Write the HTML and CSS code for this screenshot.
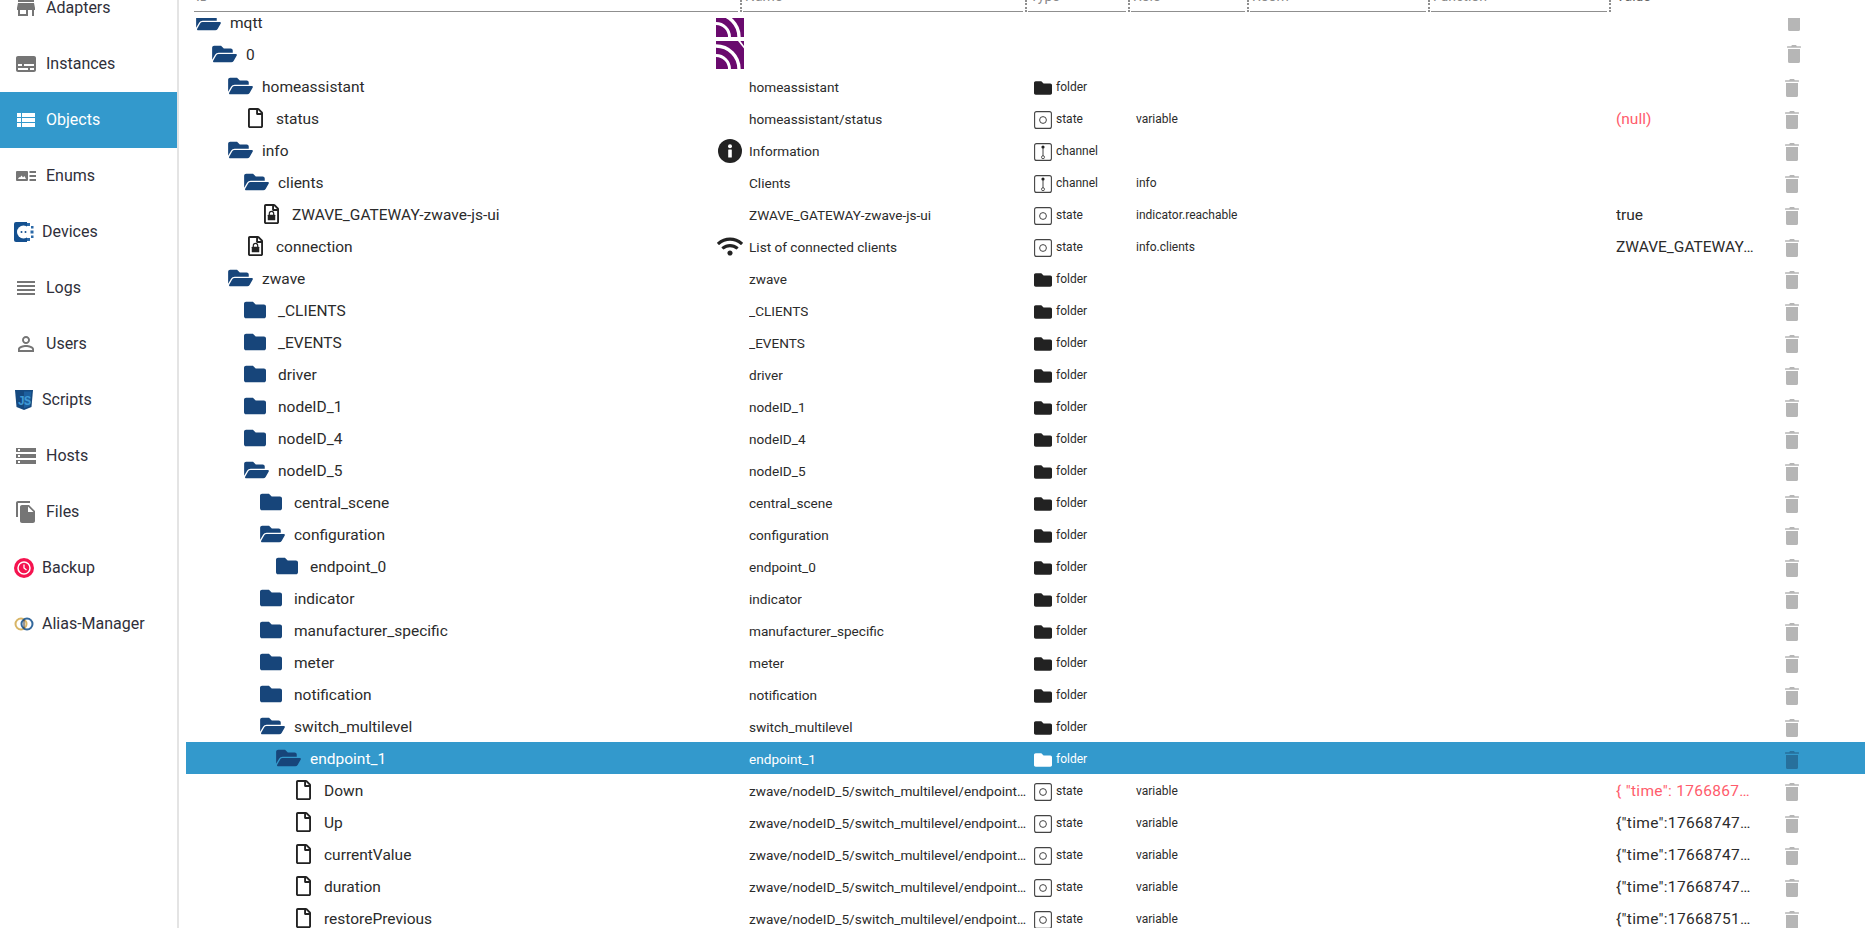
FILE: index.html
```html
<!DOCTYPE html>
<html lang="en">
<head>
  <meta charset="UTF-8" />
  <title>Objects</title>
  <link rel="stylesheet" href="styles.css">
</head>
<body>
  <svg class="sprite" aria-hidden="true">
    <symbol id="open" viewBox="0 0 576 512"><path d="M572.694 292.093L500.27 416.248A63.997 63.997 0 0 1 444.989 448H45.025c-18.523 0-30.064-20.093-20.731-36.093l72.424-124.155A64 64 0 0 1 152 256h399.964c18.523 0 30.064 20.093 20.73 36.093zM152 224h328v-48c0-26.51-21.49-48-48-48H272l-64-64H48C21.49 64 0 85.49 0 112v278.046l69.077-118.418C86.214 242.25 117.989 224 152 224z"/></symbol>
    <symbol id="closed" viewBox="0 0 512 512"><path d="M464 128H272l-64-64H48C21.49 64 0 85.49 0 112v288c0 26.51 21.49 48 48 48h416c26.51 0 48-21.49 48-48V176c0-26.51-21.49-48-48-48z"/></symbol>
    <symbol id="file" viewBox="0 0 384 512"><path d="M369.9 97.9L286 14C277 5 264.8-.1 252.1-.1H48C21.5 0 0 21.5 0 48v416c0 26.5 21.5 48 48 48h288c26.5 0 48-21.5 48-48V131.9c0-12.7-5.1-25-14.1-34zM332.1 128H256V51.9l76.1 76.1zM48 464V48h160v104c0 13.3 10.7 24 24 24h104v288H48z"/></symbol>
    <symbol id="lock" viewBox="0 0 384 512"><path d="M369.9 97.9L286 14C277 5 264.8-.1 252.1-.1H48C21.5 0 0 21.5 0 48v416c0 26.5 21.5 48 48 48h288c26.5 0 48-21.5 48-48V131.9c0-12.7-5.1-25-14.1-34zM332.1 128H256V51.9l76.1 76.1zM48 464V48h160v104c0 13.3 10.7 24 24 24h104v288H48z"/><rect x="96" y="272" width="192" height="144" rx="14"/><path d="M136 280v-36a56 56 0 0 1 112 0v36" fill="none" stroke="currentColor" stroke-width="30"/></symbol>
    <symbol id="state" viewBox="0 0 18 18"><rect x=".6" y=".6" width="16.8" height="16.8" rx="2" fill="none" stroke="currentColor" stroke-width="1.1"/><circle cx="9" cy="9" r="3.4" fill="none" stroke="currentColor" stroke-width="1"/></symbol>
    <symbol id="channel" viewBox="0 0 18 18"><rect x=".6" y=".6" width="16.8" height="16.8" rx="2" fill="none" stroke="currentColor" stroke-width="1.1"/><path d="M9 4v10" stroke="currentColor" stroke-width="1"/><circle cx="9" cy="4" r="1.6"/><circle cx="9" cy="14.2" r="1.5" fill="#fff" stroke="currentColor" stroke-width=".9"/></symbol>
    <symbol id="trash" viewBox="0 0 448 512" preserveAspectRatio="none"><path d="M432 32H312l-9.4-18.7A24 24 0 0 0 281.1 0H166.8a23.72 23.72 0 0 0-21.4 13.3L136 32H16A16 16 0 0 0 0 48v16a16 16 0 0 0 16 16h416a16 16 0 0 0 16-16V48a16 16 0 0 0-16-16zM32 467a48 48 0 0 0 47.9 45h288.2a48 48 0 0 0 47.9-45V112H32z"/></symbol>
    <symbol id="mqtt" viewBox="0 0 28 28"><rect width="28" height="28" fill="#6a0a6e"/><g fill="none" stroke="#fff"><circle cx="0" cy="28" r="13.5" stroke-width="3"/><circle cx="0" cy="28" r="23" stroke-width="3.4"/></g><path d="M22 0h2.4L28 5v2.6z" fill="#fff"/></symbol>
    <symbol id="info" viewBox="0 0 24 24"><circle cx="12" cy="12" r="12"/><rect x="10.2" y="10.4" width="3.6" height="8" rx=".5" fill="#fff"/><circle cx="12" cy="7.2" r="2" fill="#fff"/></symbol>
    <symbol id="wifi" viewBox="0 0 640 512"><path d="M634.91 154.88C457.74-8.99 182.19-8.93 5.09 154.88c-6.66 6.16-6.79 16.59-.35 22.98l34.24 33.97c6.14 6.1 16.02 6.23 22.4.38 145.92-133.68 371.3-133.71 517.25 0 6.38 5.85 16.26 5.71 22.4-.38l34.24-33.97c6.43-6.39 6.3-16.82-.36-22.98zM320 352c-35.35 0-64 28.65-64 64s28.65 64 64 64 64-28.65 64-64-28.65-64-64-64zm202.67-83.59c-115.26-101.93-290.21-101.82-405.34 0-6.9 6.1-7.12 16.69-.57 23.15l34.44 33.99c6 5.92 15.66 6.32 22.05.8 83.95-72.57 209.74-72.41 293.49 0 6.39 5.52 16.05 5.13 22.05-.8l34.44-33.99c6.56-6.46 6.33-17.05-.56-23.15z"/></symbol>
  </svg>

  <aside class="sidebar">
    <nav class="menu">
      <a class="menu-item"><svg class="mi" viewBox="0 0 24 24"><path d="M20 4H4v2h16V4zm1 10v-2l-1-5H4l-1 5v2h1v6h10v-6h4v6h2v-6h1zm-9 4H6v-4h6v4z"/></svg>Adapters</a>
      <a class="menu-item"><svg class="mi" viewBox="0 0 24 24"><path d="M20 4H4c-1.1 0-2 .9-2 2v12c0 1.1.9 2 2 2h16c1.1 0 2-.9 2-2V6c0-1.1-.9-2-2-2zM4 12h4v2H4v-2zm10 6H4v-2h10v2zm6 0h-4v-2h4v2zm0-4H10v-2h10v2z"/></svg>Instances</a>
      <a class="menu-item active"><svg class="mi" viewBox="0 0 24 24"><path d="M3 14h4v-4H3v4zm0 5h4v-4H3v4zM3 9h4V5H3v4zm5 5h13v-4H8v4zm0 5h13v-4H8v4zM8 5v4h13V5H8z"/></svg>Objects</a>
      <a class="menu-item"><svg class="mi" viewBox="0 0 24 24"><path fill-rule="evenodd" d="M3 7h10a1 1 0 0 1 1 1v8a1 1 0 0 1-1 1H3a1 1 0 0 1-1-1V8a1 1 0 0 1 1-1zm1 8h8l-1.6-3-1.4 1.4L7.6 11.5 6 13.6 5.2 13z"/><path d="M15.5 7H22v2h-6.500zM15.500 11H22v2h-6.500zM15.500 15H22v2h-6.500z"/></svg>Enums</a>
      <a class="menu-item logo"><svg class="lg" viewBox="0 0 20 20"><path d="M2 0h11v20H2a2 2 0 0 1-2-2V2a2 2 0 0 1 2-2z" fill="#14508f"/><circle cx="9.500" cy="10" r="6.500" fill="#fff"/><circle cx="7.500" cy="10" r="1" fill="#14508f"/><circle cx="11.500" cy="10" r="1" fill="#14508f"/><g fill="#2a69a8"><rect x="13" y="1" width="3" height="3"/><rect x="17" y="4" width="2.500" height="2.500"/><rect x="16.500" y="8.500" width="3" height="3"/><rect x="17" y="13.500" width="2.500" height="2.500"/><rect x="13" y="16" width="3" height="3"/></g></svg>Devices</a>
      <a class="menu-item"><svg class="mi" viewBox="0 0 24 24"><path d="M3 15h18v-2H3v2zm0 4h18v-2H3v2zm0-8h18V9H3v2zm0-6v2h18V5H3z"/></svg>Logs</a>
      <a class="menu-item"><svg class="mi" viewBox="0 0 24 24"><path d="M12 5.900c1.160 0 2.100.94 2.100 2.100s-.94 2.100-2.100 2.100S9.900 9.160 9.900 8s.94-2.100 2.100-2.100m0 9c2.970 0 6.100 1.460 6.100 2.100v1.100H5.900V17c0-.64 3.130-2.100 6.100-2.100M12 4C9.790 4 8 5.790 8 8s1.790 4 4 4 4-1.790 4-4-1.790-4-4-4zm0 9c-2.670 0-8 1.340-8 4v3h16v-3c0-2.660-5.330-4-8-4z"/></svg>Users</a>
      <a class="menu-item logo"><svg class="lg" viewBox="0 0 20 20"><path d="M1 0h18l-1.500 17L10 20l-7.500-3z" fill="#15497f"/><path d="M10 1.500h7.300L16 16l-6 2.300z" fill="#1c5f9e"/><text x="10" y="14.500" class="js-text">JS</text></svg>Scripts</a>
      <a class="menu-item"><svg class="mi" viewBox="0 0 24 24"><path d="M2 20h20v-4H2v4zm2-3h2v2H4v-2zM2 4v4h20V4H2zm4 3H4V5h2v2zm-4 7h20v-4H2v4zm2-3h2v2H4v-2z"/></svg>Hosts</a>
      <a class="menu-item"><svg class="mi" viewBox="0 0 24 24"><path d="M16 1H4c-1.100 0-2 .9-2 2v14h2V3h12V1zm-1 4l6 6v10c0 1.100-.9 2-2 2H7.990C6.890 23 6 22.100 6 21l.01-14c0-1.100.89-2 1.990-2h7zm-1 7h5.500L14 6.500V12z"/></svg>Files</a>
      <a class="menu-item logo"><svg class="lg" viewBox="0 0 20 20"><circle cx="10" cy="10" r="10" fill="#f5134f"/><circle cx="10" cy="10" r="6" fill="none" stroke="#fff" stroke-width="1.500"/><path d="M10 6.500V10l2.500 2" fill="none" stroke="#fff" stroke-width="1.300"/></svg>Backup</a>
      <a class="menu-item logo"><svg class="lg" viewBox="0 0 20 20"><circle cx="7" cy="10" r="5.500" fill="none" stroke="#d8b566" stroke-width="2"/><circle cx="13" cy="10" r="5.500" fill="none" stroke="#33689c" stroke-width="2"/><path d="M10 5.500v9" stroke="#333" stroke-width="1"/></svg>Alias-Manager</a>
    </nav>
  </aside>

  <main class="content">
    <div class="filters">
      <div class="filter f-id"><span>ID</span></div><i class="sep"></i>
      <div class="filter f-name"><span>Name</span></div><i class="sep"></i>
      <div class="filter f-type"><span>Type</span></div><i class="sep"></i>
      <div class="filter f-role"><span>Role</span></div><i class="sep"></i>
      <div class="filter f-room"><span>Room</span></div><i class="sep"></i>
      <div class="filter f-func"><span>Function</span></div><i class="sep"></i>
      <div class="filter-value"><span>Value</span></div>
    </div>

    <div class="rows">
      <div class="row first"><div class="tree l0"><svg class="i-open"><use href="#open"/></svg>mqtt</div><div class="name"><svg class="i-mqtt"><use href="#mqtt"/></svg></div><div class="type"></div><div class="role"></div><div class="value"></div><div class="del up"><svg><use href="#trash"/></svg></div></div>
      <div class="row"><div class="tree l1"><svg class="i-open"><use href="#open"/></svg>0</div><div class="name"><svg class="i-mqtt"><use href="#mqtt"/></svg></div><div class="type"></div><div class="role"></div><div class="value"></div><div class="del up"><svg><use href="#trash"/></svg></div></div>
      <div class="row"><div class="tree l2"><svg class="i-open"><use href="#open"/></svg>homeassistant</div><div class="name"><span>homeassistant</span></div><div class="type"><svg><use href="#closed"/></svg>folder</div><div class="role"></div><div class="value"></div><div class="del"><svg><use href="#trash"/></svg></div></div>
      <div class="row"><div class="tree l3"><svg class="i-file"><use href="#file"/></svg>status</div><div class="name"><span>homeassistant/status</span></div><div class="type"><svg><use href="#state"/></svg>state</div><div class="role">variable</div><div class="value null">(null)</div><div class="del"><svg><use href="#trash"/></svg></div></div>
      <div class="row"><div class="tree l2"><svg class="i-open"><use href="#open"/></svg>info</div><div class="name"><svg class="i-info"><use href="#info"/></svg><span>Information</span></div><div class="type"><svg><use href="#channel"/></svg>channel</div><div class="role"></div><div class="value"></div><div class="del"><svg><use href="#trash"/></svg></div></div>
      <div class="row"><div class="tree l3"><svg class="i-open"><use href="#open"/></svg>clients</div><div class="name"><span>Clients</span></div><div class="type"><svg><use href="#channel"/></svg>channel</div><div class="role">info</div><div class="value"></div><div class="del"><svg><use href="#trash"/></svg></div></div>
      <div class="row"><div class="tree l4"><svg class="i-file"><use href="#lock"/></svg>ZWAVE_GATEWAY-zwave-js-ui</div><div class="name"><span>ZWAVE_GATEWAY-zwave-js-ui</span></div><div class="type"><svg><use href="#state"/></svg>state</div><div class="role">indicator.reachable</div><div class="value">true</div><div class="del"><svg><use href="#trash"/></svg></div></div>
      <div class="row"><div class="tree l3"><svg class="i-file"><use href="#lock"/></svg>connection</div><div class="name"><svg class="i-wifi"><use href="#wifi"/></svg><span>List of connected clients</span></div><div class="type"><svg><use href="#state"/></svg>state</div><div class="role">info.clients</div><div class="value">ZWAVE_GATEWAY-zwave-js-ui</div><div class="del"><svg><use href="#trash"/></svg></div></div>
      <div class="row"><div class="tree l2"><svg class="i-open"><use href="#open"/></svg>zwave</div><div class="name"><span>zwave</span></div><div class="type"><svg><use href="#closed"/></svg>folder</div><div class="role"></div><div class="value"></div><div class="del"><svg><use href="#trash"/></svg></div></div>
      <div class="row"><div class="tree l3"><svg class="i-closed"><use href="#closed"/></svg>_CLIENTS</div><div class="name"><span>_CLIENTS</span></div><div class="type"><svg><use href="#closed"/></svg>folder</div><div class="role"></div><div class="value"></div><div class="del"><svg><use href="#trash"/></svg></div></div>
      <div class="row"><div class="tree l3"><svg class="i-closed"><use href="#closed"/></svg>_EVENTS</div><div class="name"><span>_EVENTS</span></div><div class="type"><svg><use href="#closed"/></svg>folder</div><div class="role"></div><div class="value"></div><div class="del"><svg><use href="#trash"/></svg></div></div>
      <div class="row"><div class="tree l3"><svg class="i-closed"><use href="#closed"/></svg>driver</div><div class="name"><span>driver</span></div><div class="type"><svg><use href="#closed"/></svg>folder</div><div class="role"></div><div class="value"></div><div class="del"><svg><use href="#trash"/></svg></div></div>
      <div class="row"><div class="tree l3"><svg class="i-closed"><use href="#closed"/></svg>nodeID_1</div><div class="name"><span>nodeID_1</span></div><div class="type"><svg><use href="#closed"/></svg>folder</div><div class="role"></div><div class="value"></div><div class="del"><svg><use href="#trash"/></svg></div></div>
      <div class="row"><div class="tree l3"><svg class="i-closed"><use href="#closed"/></svg>nodeID_4</div><div class="name"><span>nodeID_4</span></div><div class="type"><svg><use href="#closed"/></svg>folder</div><div class="role"></div><div class="value"></div><div class="del"><svg><use href="#trash"/></svg></div></div>
      <div class="row"><div class="tree l3"><svg class="i-open"><use href="#open"/></svg>nodeID_5</div><div class="name"><span>nodeID_5</span></div><div class="type"><svg><use href="#closed"/></svg>folder</div><div class="role"></div><div class="value"></div><div class="del"><svg><use href="#trash"/></svg></div></div>
      <div class="row"><div class="tree l4"><svg class="i-closed"><use href="#closed"/></svg>central_scene</div><div class="name"><span>central_scene</span></div><div class="type"><svg><use href="#closed"/></svg>folder</div><div class="role"></div><div class="value"></div><div class="del"><svg><use href="#trash"/></svg></div></div>
      <div class="row"><div class="tree l4"><svg class="i-open"><use href="#open"/></svg>configuration</div><div class="name"><span>configuration</span></div><div class="type"><svg><use href="#closed"/></svg>folder</div><div class="role"></div><div class="value"></div><div class="del"><svg><use href="#trash"/></svg></div></div>
      <div class="row"><div class="tree l5"><svg class="i-closed"><use href="#closed"/></svg>endpoint_0</div><div class="name"><span>endpoint_0</span></div><div class="type"><svg><use href="#closed"/></svg>folder</div><div class="role"></div><div class="value"></div><div class="del"><svg><use href="#trash"/></svg></div></div>
      <div class="row"><div class="tree l4"><svg class="i-closed"><use href="#closed"/></svg>indicator</div><div class="name"><span>indicator</span></div><div class="type"><svg><use href="#closed"/></svg>folder</div><div class="role"></div><div class="value"></div><div class="del"><svg><use href="#trash"/></svg></div></div>
      <div class="row"><div class="tree l4"><svg class="i-closed"><use href="#closed"/></svg>manufacturer_specific</div><div class="name"><span>manufacturer_specific</span></div><div class="type"><svg><use href="#closed"/></svg>folder</div><div class="role"></div><div class="value"></div><div class="del"><svg><use href="#trash"/></svg></div></div>
      <div class="row"><div class="tree l4"><svg class="i-closed"><use href="#closed"/></svg>meter</div><div class="name"><span>meter</span></div><div class="type"><svg><use href="#closed"/></svg>folder</div><div class="role"></div><div class="value"></div><div class="del"><svg><use href="#trash"/></svg></div></div>
      <div class="row"><div class="tree l4"><svg class="i-closed"><use href="#closed"/></svg>notification</div><div class="name"><span>notification</span></div><div class="type"><svg><use href="#closed"/></svg>folder</div><div class="role"></div><div class="value"></div><div class="del"><svg><use href="#trash"/></svg></div></div>
      <div class="row"><div class="tree l4"><svg class="i-open"><use href="#open"/></svg>switch_multilevel</div><div class="name"><span>switch_multilevel</span></div><div class="type"><svg><use href="#closed"/></svg>folder</div><div class="role"></div><div class="value"></div><div class="del"><svg><use href="#trash"/></svg></div></div>
      <div class="row selected"><div class="tree l5"><svg class="i-open"><use href="#open"/></svg>endpoint_1</div><div class="name"><span>endpoint_1</span></div><div class="type"><svg><use href="#closed"/></svg>folder</div><div class="role"></div><div class="value"></div><div class="del"><svg><use href="#trash"/></svg></div></div>
      <div class="row"><div class="tree l6"><svg class="i-file"><use href="#file"/></svg>Down</div><div class="name"><span>zwave/nodeID_5/switch_multilevel/endpoint_1/Down</span></div><div class="type"><svg><use href="#state"/></svg>state</div><div class="role">variable</div><div class="value json null">{ "time": 1766867412000, "value": 0 }</div><div class="del"><svg><use href="#trash"/></svg></div></div>
      <div class="row"><div class="tree l6"><svg class="i-file"><use href="#file"/></svg>Up</div><div class="name"><span>zwave/nodeID_5/switch_multilevel/endpoint_1/Up</span></div><div class="type"><svg><use href="#state"/></svg>state</div><div class="role">variable</div><div class="value json">{"time":1766874712000,"value":0}</div><div class="del"><svg><use href="#trash"/></svg></div></div>
      <div class="row"><div class="tree l6"><svg class="i-file"><use href="#file"/></svg>currentValue</div><div class="name"><span>zwave/nodeID_5/switch_multilevel/endpoint_1/currentValue</span></div><div class="type"><svg><use href="#state"/></svg>state</div><div class="role">variable</div><div class="value json">{"time":1766874713000,"value":0}</div><div class="del"><svg><use href="#trash"/></svg></div></div>
      <div class="row"><div class="tree l6"><svg class="i-file"><use href="#file"/></svg>duration</div><div class="name"><span>zwave/nodeID_5/switch_multilevel/endpoint_1/duration</span></div><div class="type"><svg><use href="#state"/></svg>state</div><div class="role">variable</div><div class="value json">{"time":1766874714000,"value":0}</div><div class="del"><svg><use href="#trash"/></svg></div></div>
      <div class="row"><div class="tree l6"><svg class="i-file"><use href="#file"/></svg>restorePrevious</div><div class="name"><span>zwave/nodeID_5/switch_multilevel/endpoint_1/restorePrevious</span></div><div class="type"><svg><use href="#state"/></svg>state</div><div class="role">variable</div><div class="value json">{"time":1766875112000,"value":0}</div><div class="del"><svg><use href="#trash"/></svg></div></div>
    </div>
  </main>
</body>
</html>
```

FILE: styles.css
```css
html, body {
  height: 100%;
}

body {
  margin: 0;
  display: flex;
  overflow: hidden;
  background: #fff;
  color: #2b2b2b;
  font-family: Roboto, Arial, sans-serif;
}

.sprite {
  display: none;
}

/* Left menu, scrolled 20px down */
.sidebar {
  width: 177px;
  flex-shrink: 0;
  border-right: 2px solid #e4e4e4;
  overflow: hidden;
}

.menu {
  margin-top: -20px;
}

.menu-item {
  display: flex;
  align-items: center;
  height: 56px;
  padding: 0 0 2px 14px;
  box-sizing: border-box;
  font-size: 16px;
  color: #2f2f3a;
}

.menu-item .mi {
  width: 24px;
  height: 24px;
  margin: 2px 8px 0 0;
  fill: #757575;
  flex-shrink: 0;
}

.menu-item .lg {
  width: 20px;
  height: 20px;
  margin: 2px 8px 0 0;
  flex-shrink: 0;
}

.menu-item.active {
  background: #3399cc;
  color: #fff;
}

.menu-item.active .mi {
  fill: #fff;
}

.js-text {
  font-family: "Liberation Mono", monospace;
  font-size: 12px;
  font-weight: 700;
  letter-spacing: -1px;
  fill: #3f9ad6;
  text-anchor: middle;
}

.content {
  flex: 1;
  min-width: 0;
  margin-left: 7px;
  display: flex;
  flex-direction: column;
}

/* Column filters, only their lower edge is on screen */
.filters {
  display: flex;
  height: 18px;
  padding-left: 8px;
  flex-shrink: 0;
  font-size: 14px;
  color: #8a8a8a;
}

.filter {
  height: 11px;
  border-bottom: 1px solid #8f8f8f;
  overflow: hidden;
  padding-left: 2px;
}

.filter span,
.filter-value span {
  display: block;
  margin-top: -12px;
  line-height: 16px;
}

.filter-value {
  margin-left: 4px;
  height: 11px;
  overflow: hidden;
  color: #666;
}

.f-id { width: 542px; }
.f-name { width: 278px; }
.f-type { width: 96px; }
.f-role { width: 112px; }
.f-room { width: 174px; }
.f-func { width: 174px; }

.sep {
  width: 0;
  height: 12px;
  margin: 0 1.5px;
  border-left: 2px dotted #8f8f8f;
}

/* Object rows */
.rows {
  flex: 1;
  min-height: 0;
  overflow: hidden;
}

.row {
  display: grid;
  grid-template-columns: 530px 318px 102px 480px 160px 1fr;
  height: 32px;
  align-items: center;
}

.row.first {
  margin-top: -12px;
}

.row.selected {
  background: #3399cc;
  color: #fff;
}

.tree {
  display: flex;
  align-items: center;
  padding-top: 2px;
  font-size: 15.5px;
  white-space: nowrap;
}

.l0 { padding-left: 10px; }
.l1 { padding-left: 26px; }
.l2 { padding-left: 42px; }
.l3 { padding-left: 58px; }
.l4 { padding-left: 74px; }
.l5 { padding-left: 90px; }
.l6 { padding-left: 106px; }

.i-open {
  width: 25px;
  height: 22px;
  margin: -2px 9px 0 0;
  fill: #17457a;
  flex-shrink: 0;
}

.i-closed {
  width: 22px;
  height: 22px;
  margin: -2px 12px 0 0;
  fill: #17457a;
  flex-shrink: 0;
}

.i-file {
  width: 15px;
  height: 20px;
  margin: -2px 13px 0 4px;
  fill: #222;
  color: #222;
  flex-shrink: 0;
}

.name {
  position: relative;
  padding: 1px 2px 0 33px;
  font-size: 13.6px;
  white-space: nowrap;
  display: flex;
  align-items: center;
  min-width: 0;
}

.name span {
  overflow: hidden;
  text-overflow: ellipsis;
}

/* Logos and icons sit in the gap in front of the name */
.name svg {
  position: absolute;
  left: 0;
}

.i-mqtt {
  width: 28px;
  height: 28px;
}

.i-info {
  width: 24px;
  height: 24px;
  left: 2px !important;
  fill: #222;
}

.i-wifi {
  width: 26px;
  height: 21px;
  left: 1px !important;
  fill: #222;
}

.type {
  display: flex;
  align-items: center;
  padding-top: 2px;
  font-size: 12px;
}

.type svg {
  width: 18px;
  height: 18px;
  margin: 2px 4px 0 0;
  fill: #222;
  color: #444;
  flex-shrink: 0;
}

.selected .type svg {
  fill: #fff;
}

.role {
  padding-top: 2px;
  font-size: 12px;
}

.value {
  padding: 2px 20px 0 0;
  font-size: 15.5px;
  white-space: nowrap;
  overflow: hidden;
  text-overflow: ellipsis;
}

.value.json {
  letter-spacing: .3px;
}

.value.null {
  color: #ff5c6c;
}

.del {
  display: flex;
  padding: 4px 0 0 9px;
}

.del svg {
  width: 14px;
  height: 18px;
  fill: #b6b6b6;
}

.del.up {
  padding: 0 0 0 11px;
}

.selected .del svg {
  fill: #27709c;
}
```
